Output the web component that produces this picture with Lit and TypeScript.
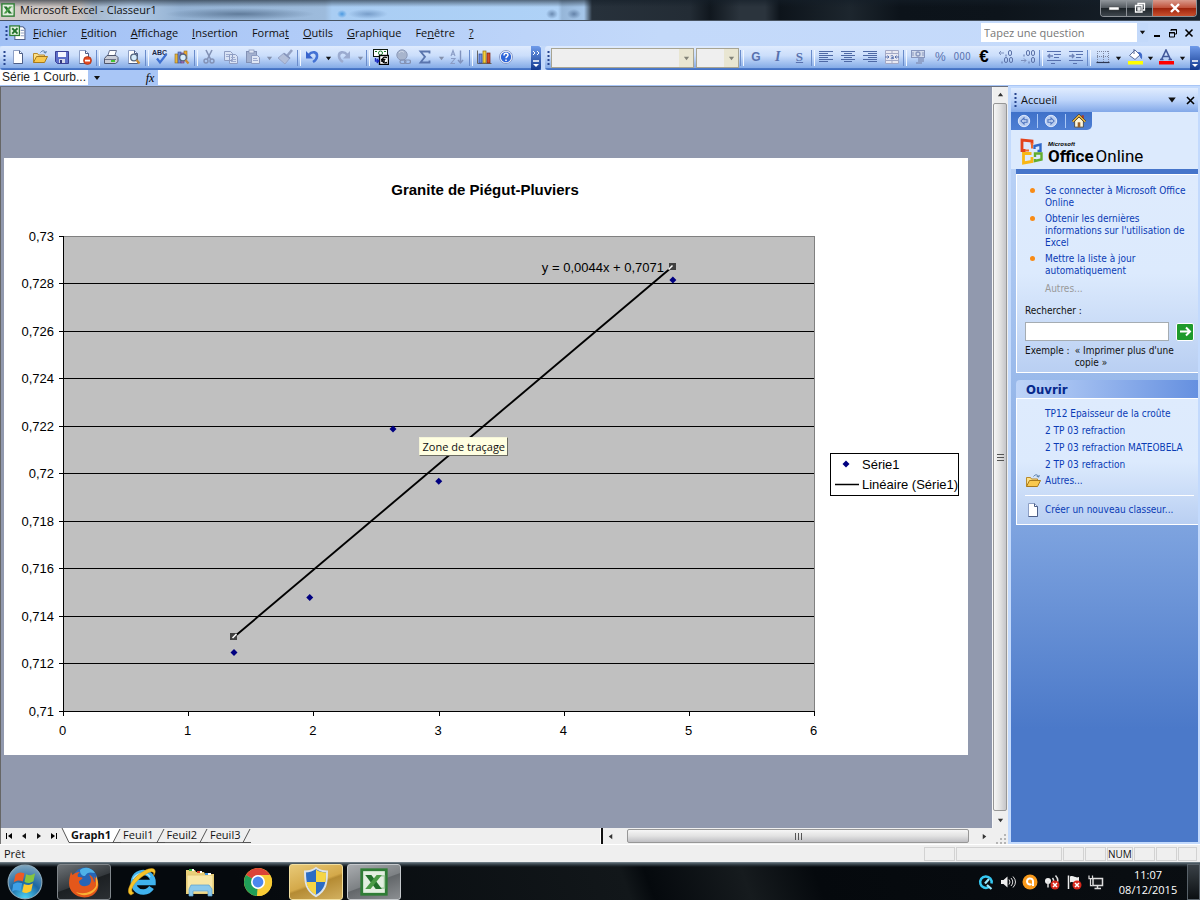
import { LitElement, html, svg, css, nothing } from "lit";
import { customElement, state } from "lit/decorators.js";
import { classMap } from "lit/directives/class-map.js";

const ui = css`
  * { box-sizing: border-box; }
  button { font: inherit; color: inherit; background: none; border: 0; padding: 0; margin: 0; display: flex; align-items: center; justify-content: center; }
  svg { display: block; flex: none; }
  a { color: inherit; text-decoration: none; }
`;

const box = (body: unknown, size = 16) => html`<svg width=${size} height=${size} viewBox="0 0 16 16" aria-hidden="true">${body}</svg>`;

const page = svg`<path d="M3.500 1.500h6l3 3v10h-9z" fill="#fff" stroke="#8d9fc5"/><path d="M9.500 1.500v3h3v10h-9" fill="none" stroke="#4d5f88"/>`;
const folder = svg`<path d="M1.500 13.500v-9h4l1 1.500h6v2" fill="#fbe08a" stroke="#b98a2a"/><path d="M1.500 13.500l3-6h11l-3 6z" fill="#f9c94f" stroke="#a87a1c"/><path d="M8.500 3.500c2-2.500 4-2 5 0m-1.800-.2l2 .8.6-2" fill="none" stroke="#557ba8"/>`;
const lens = svg`<circle cx="9" cy="8.500" r="3.300" fill="#d6ecfb" stroke="#54657f" stroke-width="1.300"/><path d="M11.500 11l3 3.500" stroke="#c98b33" stroke-width="2.200"/>`;
const lines = (rows: number[][]) => rows.map(([x, w], i) => svg`<rect x=${x} y=${2 + i * 2} width=${w} height="1" fill="#4e69a5"/>`);

const icons: Record<string, unknown> = {
  page, folder,
  save: svg`<path d="M1.500 2.500h13v12h-11l-2-2z" fill="#5d6fc9" stroke="#3a3f94"/><rect x="4" y="3" width="8" height="5" fill="#f4f6ff"/><rect x="5" y="10" width="6" height="4" fill="#d5d9ea"/><rect x="6" y="11" width="2" height="3" fill="#363a80"/>`,
  perm: svg`${page}<circle cx="11.500" cy="11.500" r="4" fill="#e2481e" stroke="#a02a0c" stroke-width=".6"/><rect x="9" y="10.700" width="5" height="1.800" fill="#fff"/>`,
  print: svg`<path d="M5 6l1.500-4.500h7L12 6" fill="#fff" stroke="#66718f"/><path d="M1.500 9.500l2.500-3h9l2 2v4l-2.500 2h-11z" fill="#c9cdd8" stroke="#4f566d"/><path d="M2 10.500h11" stroke="#6c7287"/><rect x="8" y="11" width="4" height="2" fill="#43c433"/>`,
  preview: svg`${page}${lens}`,
  spell: svg`<text x="0" y="6" font-family="Liberation Sans" font-size="7" font-weight="bold" fill="#1b2746">ABC</text><path d="M5 9.500l3 4L14.500 5" fill="none" stroke="#3d6fd0" stroke-width="2.200"/>`,
  research: svg`<rect x="1" y="5" width="3" height="9" fill="#e7b53b" stroke="#8b6c25" stroke-width=".6"/><rect x="4" y="3" width="3" height="11" fill="#6f8bd8" stroke="#3b4f94" stroke-width=".6"/><rect x="7" y="4" width="3" height="10" fill="#a774c0" stroke="#5c3a74" stroke-width=".6"/><rect x="10" y="2" width="3" height="8" fill="#f1a72c" stroke="#8b6c25" stroke-width=".6"/>${lens}`,
  cut: svg`<path d="M5 1l4.500 9M11 1L6.500 10" stroke="#8291b5" stroke-width="1.600"/><circle cx="5" cy="12" r="2" fill="none" stroke="#8291b5" stroke-width="1.400"/><circle cx="11" cy="12" r="2" fill="none" stroke="#8291b5" stroke-width="1.400"/>`,
  copy: svg`<path d="M1.500 2.500h6l2 2v7h-8zM6.500 5.500h6l2 2v7h-8z" fill="#d9e3f5" stroke="#8e9dc2"/><path d="M3 5.500h4M3 7.500h3M8 8.500h4M8 10.500h5M8 12.500h5" stroke="#9dabd0"/>`,
  paste: svg`<rect x="1.500" y="2.500" width="10" height="11" fill="#a3b1cf" stroke="#8291b5"/><rect x="4" y="1" width="5" height="3" fill="#dfe7f5" stroke="#8291b5" stroke-width=".7"/><path d="M6.500 6.500h6l2 2v6h-8z" fill="#dfe7f5" stroke="#8e9dc2"/><path d="M8 9.500h4M8 11.500h5" stroke="#9dabd0"/>`,
  brush: svg`<path d="M15 1l-5 6" stroke="#94a2c4" stroke-width="2.600"/><path d="M7 4l6 5-5 6-7-6z" fill="#b3bfd9" stroke="#98a6c8"/><path d="M7 4.500l6 5" stroke="#8493ba" stroke-width="1.600"/>`,
  undo: svg`<path d="M4.500 6c4-4.500 9-3 8.500 1.500-.2 2.500-1.500 4-4 5.500" fill="none" stroke="#4472d4" stroke-width="2.600"/><path d="M2 2v7.500h7z" fill="#3864cc"/>`,
  redo: svg`<path d="M11.500 6c-4-4.500-9-3-8.500 1.500.2 2.500 1.500 4 4 5.500" fill="none" stroke="#9babd0" stroke-width="2.600"/><path d="M14 2v7.500H7z" fill="#9babd0"/>`,
  euroconv: svg`<rect x=".5" y=".5" width="14" height="7" fill="#fff" stroke="#101a10"/><circle cx="7.500" cy="4" r="2" fill="none" stroke="#157a28"/><path d="M2 2.500h2M11 2.500h2" stroke="#157a28"/><rect x="6.500" y="6.500" width="9" height="9" fill="#fff" stroke="#000" stroke-width="1.400"/><path d="M14 8.600c-3-1.400-4.600.2-4.600 2.400s1.600 3.800 4.600 2.400M8 10.300h4.500M8 12h4" fill="none" stroke="#000" stroke-width="1.300"/><path d="M2.500 9v3h3M3.800 10l2 2-2 2" fill="none" stroke="#1c2cc0" stroke-width="1.400"/>`,
  globe: svg`<circle cx="7" cy="6" r="5.200" fill="#a8b5cd" stroke="#8d9bba"/><path d="M4 4c1.500-2 4-2 5-.5" fill="none" stroke="#cfd8e8"/><rect x="5" y="11" width="6" height="3.500" rx="1.700" fill="none" stroke="#8391b2" stroke-width="1.200"/><rect x="9.500" y="11" width="6" height="3.500" rx="1.700" fill="none" stroke="#8391b2" stroke-width="1.200"/>`,
  sigma: svg`<path d="M12.500 4.500V2.500H3.500L8 7.800l-4.500 5.700h9v-2" fill="none" stroke="#5a75ad" stroke-width="1.800"/>`,
  sort: svg`<path d="M2 7l2-5.500L6 7M2.700 5.200h2.600M2 9.500h4l-4 5h4" fill="none" stroke="#8a9cc5" stroke-width="1.100"/><path d="M11.500 1.500v12M9 11l2.500 3 2.500-3" fill="none" stroke="#8193be" stroke-width="1.400"/>`,
  chart: svg`<path d="M1.500 1.500v13h14" fill="none" stroke="#666"/><rect x="3" y="5" width="3" height="9" fill="#6c8de0" stroke="#2a479b" stroke-width=".7"/><rect x="7" y="2" width="3" height="12" fill="#f5cf3f" stroke="#8f6e14" stroke-width=".7"/><rect x="11" y="4" width="3" height="10" fill="#d54b2a" stroke="#7a210d" stroke-width=".7"/>`,
  help: svg`<circle cx="8" cy="8" r="6.500" fill="#fff" stroke="#8498c8"/><circle cx="8" cy="8" r="5.200" fill="#2f66d9"/><path d="M6 6.500c0-3 4-2.600 4-.4 0 1.500-2 1.500-2 3.200M8 10.500v1.500" fill="none" stroke="#fff" stroke-width="1.500"/>`,
  left: svg`${lines([[1, 14], [1, 9], [1, 14], [1, 9], [1, 14], [1, 9]])}`,
  center: svg`${lines([[1, 14], [4, 8], [1, 14], [4, 8], [1, 14], [4, 8]])}`,
  right: svg`${lines([[1, 14], [6, 9], [1, 14], [6, 9], [1, 14], [6, 9]])}`,
  merge: svg`<path d="M1.500 1.500h13v13h-13zM1.500 4.500h13M1.500 11.500h13M8 1.500v3M8 11.500v3" fill="#e9e9f2" stroke="#a3a9c6"/><path d="M1 8h4M3.500 6.500L5 8l-1.500 1.500M15 8h-4M12.500 6.500L11 8l1.500 1.500M6.700 7c2.600-1 2.600 0 2.600 3M9 8.500c-3 0-2.500 2 0 1" fill="none" stroke="#5871ae"/>`,
  money: svg`<rect x="1.500" y="1.500" width="13" height="7" fill="#d4dcec" stroke="#8796bd"/><circle cx="8" cy="5" r="2" fill="none" stroke="#8796bd" stroke-width="1.300"/><path d="M3 3v4M13 3v4" stroke="#8796bd"/><path d="M8 10h6M8 12h6M6 14h6" stroke="#8796bd" stroke-width="1.500"/>`,
  addDec: svg`<path d="M1 4h5M3 2L1 4l2 2" fill="none" stroke="#7d90bd"/><path d="M8 5.500v2M4 12.500v2" stroke="#5c72a8"/><rect x="10.500" y="1.500" width="3" height="5" rx="1.500" fill="none" stroke="#5c72a8"/><rect x="6.500" y="8.500" width="3" height="5" rx="1.500" fill="none" stroke="#5c72a8"/><rect x="11.500" y="8.500" width="3" height="5" rx="1.500" fill="none" stroke="#5c72a8"/>`,
  delDec: svg`<path d="M1 11.500h5M4 9.500l2 2-2 2" fill="none" stroke="#7d90bd"/><path d="M4 5.500v2M9 12.500v2" stroke="#5c72a8"/><rect x="6.500" y="1.500" width="3" height="5" rx="1.500" fill="none" stroke="#5c72a8"/><rect x="11.500" y="1.500" width="3" height="5" rx="1.500" fill="none" stroke="#5c72a8"/><rect x="11.500" y="8.500" width="3" height="5" rx="1.500" fill="none" stroke="#5c72a8"/>`,
  outdent: svg`<path d="M1 2.500h14M8 5.500h7M8 8.500h5M1 11.500h14M5 14.500h4" stroke="#5871ae"/><path d="M7 7H2M4 5L2 7l2 2" fill="none" stroke="#6f84b8" stroke-width="1.400"/>`,
  indent: svg`<path d="M1 2.500h14M8 5.500h7M8 8.500h5M1 11.500h14M5 14.500h4" stroke="#5871ae"/><path d="M1 7h5M4 5l2 2-2 2" fill="none" stroke="#6f84b8" stroke-width="1.400"/>`,
  borders: svg`<path d="M2.500 2v11M8.500 2v11M13.500 2v11M2 2.500h12M2 7.500h12" stroke="#7d87a0" stroke-dasharray="1 1"/><path d="M1.500 13.500h13" stroke="#2c3752" stroke-width="1.200"/>`,
  fill: svg`<path d="M2.500 6.500L8 1l5 5-5 4.500z" fill="#fff" stroke="#5a6c9a"/><path d="M7 0v5" stroke="#5a6c9a"/><path d="M11.500 3.500c3 0 3.500 2 3 6-1-1-1.500-2.500-1.500-3.500z" fill="#3a66c8" stroke="#3a66c8"/><rect x="1" y="12" width="15" height="3.500" fill="#ff0"/>`,
  color: svg`<path d="M3.500 10.500L8 1l4.500 9.500M5 7.500h6M2 10.500h3.500M10.500 10.500H14" fill="none" stroke="#42589a" stroke-width="1.600"/><rect x="1" y="12" width="15" height="3.500" fill="red"/>`,
  excel: svg`<rect x="1" y="1" width="14" height="14" fill="#e3efe0" stroke="#2f7d35" stroke-width="1.600"/><path d="M11.500 4.500H14v7H9" fill="none" stroke="#9cc79a" stroke-width=".8"/><path d="M3 4h3.500l6 8H9z" fill="#22712b"/><path d="M12.500 4H9.500L3 12h3z" fill="#4a9a45"/>`,
  doc: svg`<path d="M8 2.500h5l2 2v10H5.500v-4" fill="#fff" stroke="#51638d"/><path d="M11 6h3M11 8.500h3M11 11h3" stroke="#8fa0c2"/><rect x=".8" y="1.800" width="9" height="9" fill="#e4f3e0" stroke="#2f7d35" stroke-width="1.200"/><path d="M3 4l5 5M8 4L3 9" stroke="#22712b" stroke-width="1.700"/>`,
};

const tri = (dir = "down", size = 7) => {
  const d: Record<string, string> = { down: "M1 2h6L4 6z", up: "M1 6h6L4 2z", left: "M6 1v6L2 4z", right: "M2 1v6l4-3z" };
  return html`<svg width=${size} height=${size} viewBox="0 0 8 8" aria-hidden="true"><path d=${d[dir]} fill="currentColor"/></svg>`;
};

@customElement("chart-sheet")
class ChartSheet extends LitElement {
  static styles = [ui, css`
    :host { display: block; position: relative; background: #fff; font-family: "Liberation Sans", Arial, sans-serif; }
    .plot { width: 100%; height: auto; }
    .tip { position: absolute; left: 43%; top: 46.700%; background: #ffffe1; border: 1px solid #f4f4d8; border-right-color: #6b6b62; border-bottom-color: #6b6b62; font: 11px/17px "Open Sans", sans-serif; padding: 0 2px 0 3px; white-space: nowrap; color: #111; }
    .label { font-size: 13px; fill: #000; }
    .title { font-size: 15px; font-weight: bold; }
    .end { text-anchor: end; }
    .mid { text-anchor: middle; }
  `];
  points = [[1.37, 0.71248], [1.975, 0.7148], [2.64, 0.7219], [3.005, 0.7197], [4.875, 0.72817]];
  px(v: number) { return 58.5 + v * 125.2; }
  py(v: number) { return 553.5 - (v - 0.71) * 23750; }
  mark(x: number, y: number) { return svg`<path d="M${x} ${y - 3.5}l3.500 3.500-3.500 3.500-3.500-3.500z" fill="#000080"/>`; }
  render() {
    const ys = Array.from({ length: 11 }, (_, i) => 0.71 + i * 0.002);
    return html`
      <svg class="plot" viewBox="0 0 964 597" role="img" aria-label="Granite de Piégut-Pluviers">
        <defs><clipPath id="legend"><rect x="826" y="295" width="128" height="42"/></clipPath></defs>
        <text class="title mid" x="481" y="37">Granite de Piégut-Pluviers</text>
        <rect x="59.500" y="78.500" width="751" height="475" fill="#c0c0c0" stroke="#808080"/>
        ${ys.map((v, i) => {
          const y = Math.floor(this.py(v)) + 0.5;
          return svg`<path d="M55 ${y}H${i > 0 && i < 10 ? 810 : 60}" stroke="#000"/>
            <text class="label end" x="50" y=${y + 4.5}>${String(+v.toFixed(3)).replace(".", ",")}</text>`;
        })}
        <path d="M59.500 78V554" stroke="#000"/><path d="M59 553.500H811" stroke="#000"/>
        ${[0, 1, 2, 3, 4, 5, 6].map((v) => svg`<path d="M${Math.floor(this.px(v)) + 1.5} 554v4" stroke="#000"/><text class="label mid" x=${this.px(v)} y="577">${v}</text>`)}
        <path d="M230 479L668 109" stroke="#000" stroke-width="1.900"/>
        <rect x="226" y="475" width="7" height="7" fill="#404040"/><rect x="665" y="105" width="7" height="7" fill="#404040"/>
        <path d="M228.500 480l4-4M664.500 111.500l4-4" stroke="#fff" stroke-width="1.500"/>
        ${this.points.map(([x, y]) => this.mark(this.px(x), this.py(y)))}
        <text class="label end" x="660" y="114">y = 0,0044x + 0,7071</text>
        <rect x="826.500" y="295.500" width="128" height="42" fill="#fff" stroke="#000"/>
        ${this.mark(842, 306)}
        <path d="M831 326.500h24" stroke="#000" stroke-width="1.500"/>
        <g clip-path="url(#legend)"><text class="label" x="858" y="311">Série1</text><text class="label" x="858" y="331">Linéaire (Série1)</text></g>
      </svg>
      <div class="tip" role="tooltip">Zone de traçage</div>`;
  }
}

@customElement("task-pane")
class TaskPane extends LitElement {
  static styles = [ui, css`
    :host { display: flex; flex-direction: column; border: solid #c3dafd; border-width: 2px 2px 2px 3px; background: linear-gradient(#c4dafa, #8db0e6 50%, #4b79c9 85%); font: 10px/12px "DejaVu Sans Condensed", "DejaVu Sans", sans-serif; color: #111; }
    .head { display: flex; align-items: center; gap: 4px; height: 24px; padding: 0 1px 0 3px; background: linear-gradient(#e0ecfe, #bed5fa 50%, #82a8e8); font: 11px/16px "Open Sans", sans-serif; }
    .grow { flex: 1; }
    .head button { width: 14px; height: 16px; }
    .body { background: #dceafd; padding-left: 5px; }
    .nav { display: flex; align-items: center; width: 81px; height: 18px; margin-left: -5px; background: linear-gradient(#3f71c9, #4e7fd4); border-radius: 0 0 5px 0; }
    .nav button { flex: 1; height: 14px; }
    .nav button + button { border-left: 1px solid #a9c7f5; }
    .logo { display: flex; align-items: center; gap: 3px; height: 39px; padding: 4px 0 0 4px; }
    .brand { display: flex; flex-direction: column; color: #000; padding-top: 2px; }
    .ms { font: italic bold 6px/7px "Liberation Sans", sans-serif; }
    .oo { font: 17px/16px Roboto, sans-serif; }
    .oo b { margin-right: 2px; }
    .rule { height: 5px; margin-left: 5px; background: #4675ca; }
    .card { margin-left: 5px; border: 1px solid #fff; border-right: 0; background: linear-gradient(#deebfd, #dceafd 50%, #b9cff2); }
    .first { padding: 10px 4px 3px 8px; }
    ul { list-style: none; margin: 0; padding: 0; color: #0a3bb5; }
    .news li { position: relative; padding-left: 20px; margin-bottom: 4px; }
    .news li::before { content: ""; position: absolute; left: 5px; top: 3px; width: 5px; height: 5px; border-radius: 50%; background: #f88b16; }
    .more { padding: 2px 0 0 20px; color: #999; }
    .search { display: grid; grid-template-columns: 1fr 18px; gap: 5px 7px; align-items: center; margin-top: 10px; }
    .search label { grid-column: 1 / -1; }
    .search input { width: 100%; height: 19px; border: 1px solid #a5acb2; background: #fff; font: inherit; padding: 0 3px; }
    .go { width: 18px; height: 18px; background: #1f9a2b; border: 1px solid #fff; border-radius: 2px; }
    .hint { display: flex; gap: 5px; margin: 4px 0 0; }
    .hint span:first-child { white-space: nowrap; }
    .open { margin: 7px 0 0 5px; height: 18px; padding-left: 10px; border-radius: 4px 0 0 0; background: linear-gradient(90deg, #bed4f8, #6590e0); font: bold 13px/20px "DejaVu Sans Condensed", "DejaVu Sans", sans-serif; color: #06288c; }
    .files { padding: 6px 4px 0 8px; color: #0a3bb5; }
    .files li { padding-left: 20px; line-height: 17px; white-space: nowrap; }
    .row { display: flex; align-items: center; gap: 4px; height: 15px; }
    .new { border-top: 1px solid #fff; margin-top: 7px; height: 28px; padding-bottom: 1px; height: 29px; }
  `];
  render() {
    return html`
      <div class="head">
        <svg width="3" height="16"><path d="M1.500 1v14" stroke="#27458f" stroke-width="2" stroke-dasharray="2 2"/></svg>
        <span class="grow">Accueil</span>
        <button aria-label="Autres volets">${tri("down", 10)}</button>
        <button aria-label="Fermer"><svg width="9" height="9"><path d="M1 1l7 7M8 1L1 8" stroke="#000" stroke-width="1.600"/></svg></button>
      </div>
      <div class="body">
        <nav class="nav">
          <button aria-label="Précédent">${box(svg`<circle cx="8" cy="8" r="6.500" fill="#b9cdf0" stroke="#e8f0ff"/><path d="M8 4.500L4.500 8 8 11.500v-2h3.500v-3H8z" fill="#c9daf6" stroke="#4c72bd" stroke-width="1.200"/>`, 14)}</button>
          <button aria-label="Suivant">${box(svg`<circle cx="8" cy="8" r="6.500" fill="#b9cdf0" stroke="#e8f0ff"/><path d="M8 4.500L11.500 8 8 11.500v-2H4.500v-3H8z" fill="#c9daf6" stroke="#4c72bd" stroke-width="1.200"/>`, 14)}</button>
          <button aria-label="Accueil">${box(svg`<rect x="11" y="1.500" width="2.500" height="6" fill="#b5371f"/><path d="M3 8v7h10V8L8 3z" fill="#fdf6dc" stroke="#444"/><path d="M.8 8.800L8 1.800l7.200 7" fill="none" stroke="#3a2b12" stroke-width="2.800"/><path d="M.8 8.800L8 1.800l7.200 7" fill="none" stroke="#f5c045" stroke-width="1.600"/><rect x="6.500" y="9.500" width="3" height="5.500" fill="#9c6428"/>`, 14)}</button>
        </nav>
        <div class="logo">
          <svg width="25" height="27" viewBox="0 0 25 27" aria-hidden="true" fill="none">
            <path d="M5.500 12.500H2V2l10 1v3.500" stroke="#e3431b" stroke-width="2.800"/><path d="M12 5v5.500M5 12.500h4" stroke="#f0682a" stroke-width="2"/>
            <path d="M14.500 11V8l6-1.500v6.500h-3" stroke="#2f68c8" stroke-width="2.400"/>
            <path d="M11.500 15.500H3.500v9.500l8.500-1.500v-4.500" stroke="#f8b614" stroke-width="2.800"/>
            <path d="M15 19v-3.500h6.500v6l-6.500 1.500v-2" stroke="#62ad2c" stroke-width="2.400"/>
          </svg>
          <div class="brand"><span class="ms">Microsoft</span><span class="oo"><b>Office</b>Online</span></div>
        </div>
      </div>
      <div class="rule"></div>
      <section class="card first">
        <ul class="news">
          <li><a href="#connect">Se connecter à Microsoft Office Online</a></li>
          <li><a href="#news">Obtenir les dernières informations sur l'utilisation de Excel</a></li>
          <li><a href="#update">Mettre la liste à jour automatiquement</a></li>
        </ul>
        <div class="more">Autres...</div>
        <form class="search" @submit=${(e: Event) => e.preventDefault()}>
          <label for="q">Rechercher :</label>
          <input id="q" type="text" />
          <button class="go" aria-label="Rechercher"><svg width="13" height="13"><path d="M1 6.500h10M7 2.500l4 4-4 4" fill="none" stroke="#fff" stroke-width="2"/></svg></button>
        </form>
        <div class="hint"><span>Exemple :</span><span>« Imprimer plus d'une copie »</span></div>
      </section>
      <div class="open">Ouvrir</div>
      <section class="card files">
        <ul>
          ${["TP12 Epaisseur de la croûte", "2 TP 03 refraction", "2 TP 03 refraction MATEOBELA", "2 TP 03 refraction"].map((f) => html`<li><a href="#file">${f}</a></li>`)}
        </ul>
        <a class="row" href="#open">${box(folder)}Autres...</a>
        <a class="row new" href="#new">${box(page)}Créer un nouveau classeur...</a>
      </section>`;
  }
}

@customElement("desktop-taskbar")
class DesktopTaskbar extends LitElement {
  static styles = [ui, css`
    :host { display: flex; align-items: center; height: 38px; background: linear-gradient(#56646d, #2a343b 2px, transparent 4px), linear-gradient(70deg, #05090d 20%, #12171a 52%, #05090d 54%, #161b1e 62%, #05090d 68%, #0a0e12); border-top: 1px solid #6c7a83; color: #fff; font: 11px/15px "Open Sans", sans-serif; }
    .start { width: 50px; height: 36px; }
    .apps { display: flex; gap: 4px; padding-left: 7px; flex: 1; }
    .app { width: 54px; height: 36px; border: 1px solid transparent; border-radius: 3px; }
    .run { border-color: #80868b; background: linear-gradient(160deg, #6d7276, #34393d 50%, #1c2023 52%, #2b2f33); }
    .alert { border-color: #f1dfa0; background: linear-gradient(160deg, #e8c977, #d4a94a 50%, #b58b33 55%, #d2b060); }
    .active { border-color: #c4c8cb; background: linear-gradient(160deg, #a9acaf, #7d8184 50%, #63676a 52%, #8b8e91); }
    .tray { display: flex; align-items: center; gap: 6px; }
    .clock { width: 72px; text-align: center; margin-left: 8px; }
    .peek { width: 13px; height: 36px; border: 1px solid #59626a; background: linear-gradient(#3a4147, #0b0f12); margin-left: 3px; }
  `];
  render() {
    const s = (body: unknown, size = 32) => html`<svg width=${size} height=${size} viewBox="0 0 32 32" aria-hidden="true">${body}</svg>`;
    const x = svg`<circle cx="22" cy="22" r="9" fill="#d8281c"/><path d="M18 18l8 8M26 18l-8 8" stroke="#fff" stroke-width="3"/>`;
    const flag = svg`<path d="M7.500 9.500c3-2.500 5-2.500 8-1l-1.500 7c-3-1.300-5-1.200-8 .8z" fill="#ee5a24"/><path d="M17 9c3 1.300 5 1.300 8-.7l-1.500 7c-3 2-5 2-8 .7z" fill="#86c440"/><path d="M5.500 18c3-2 5-2 8-.8l-1.500 7c-3-1.300-5-1.300-7.500.4z" fill="#3fa0e6"/><path d="M15 17.800c3 1.300 5 1.300 8-.7l-1.500 7c-3 2-5 2-8 .7z" fill="#fcc92e"/>`;
    return html`
      <button class="start" aria-label="Démarrer">${s(svg`<defs><radialGradient id="orb" cx=".5" cy="1" r="1"><stop offset="0" stop-color="#4fd7f7"/><stop offset=".5" stop-color="#1c67a3"/><stop offset="1" stop-color="#7fa6bf"/></radialGradient></defs><circle cx="16" cy="16" r="15" fill="url(#orb)" stroke="#8aa9bb"/>${flag}`, 36)}</button>
      <div class="apps">
        <button class="app run" aria-label="Firefox">${s(svg`<circle cx="17" cy="14" r="12.500" fill="#2765b5"/><path d="M12 4c5-4 12-2 15 3-5-1-8-1-10 3-3 0-5-2-5-6z" fill="#4fb2e8"/><path d="M3 6l1.500 3c2-2 4.500-3 7.500-3-2 2-3 3-2 5 2 0 4 0 4.500 1-.5 2-3.500 2-3.500 4 1 5 7 5 10.500 2.500 2.500-3 1.500-7-.5-10 4 2 5 5 5 8 1-1 1-3 0-6 4 3 5.500 8 3.500 13-2 5-7.500 8-13 8C7 31 1 25 1 17c0-4 1-7 2-11z" fill="#e4571b"/><path d="M28 10c3 5 3 13-4 17-5 3-12 3-16-1 8 3 17 0 20-6z" fill="#f9b233"/>`)}</button>
        <button class="app" aria-label="Internet Explorer">${s(svg`<path d="M25.500 21.500A9.800 9.800 0 1 1 27 16.500H10" fill="none" stroke="#3fb2ee" stroke-width="5.500"/><path d="M7 13c3-6 13-8 17-2" fill="none" stroke="#a1e0fa" stroke-width="1.500"/><path d="M5 29C-2 27 6 11 18 5c9-5 14-2 9.500 5 1.500-6-3.500-5-9-1C9 15 2 25 8 27z" fill="#f6c42a" stroke="#d99a13" stroke-width=".5"/>`)}</button>
        <button class="app" aria-label="Explorateur">${s(svg`<path d="M2 4h9l1 2h8l1 2h9v20H2z" fill="#e9cf79"/><path d="M3 9h26v18H3z" fill="#f8e7a6" stroke="#e0c674"/><path d="M7 4h3M15 6h3M22 8h5" stroke="#fff" stroke-width="2"/><path d="M5 4h3" stroke="#36b548" stroke-width="2"/><path d="M13 6h3" stroke="#d9432c" stroke-width="2"/><path d="M21 8h3" stroke="#3b91dc" stroke-width="2"/><path d="M7 19h18l3 4v7h-4v-5H9v5H5v-7z" fill="#8bc9ec" stroke="#5b9fcb" stroke-width=".7"/>`)}</button>
        <button class="app" aria-label="Chrome">${s(svg`<circle cx="16" cy="16" r="14" fill="#f9cc36"/><path d="M16 16L3.900 9a14 14 0 0 1 24.200 0z" fill="#dc4437"/><path d="M16 16L3.900 9a14 14 0 0 0 11 21z" fill="#1f9e58"/><path d="M16 9h12.100A14 14 0 0 1 15 30l6.500-11z" fill="#f9cc36"/><circle cx="16" cy="16" r="7" fill="#fff"/><circle cx="16" cy="16" r="5.400" fill="#4c87ee"/>`)}</button>
        <button class="app alert" aria-label="Contrôle de compte">${s(svg`<path d="M16 2c4 3 7 3.500 11 3.500 0 11-1 19-11 24.500C6 24.500 5 16.500 5 5.500 9 5.500 12 5 16 2z" fill="#2c6cc4" stroke="#dce3ea" stroke-width="2"/><path d="M16 3.500c3 2.300 6 3 10 3 0 3.500 0 6.500-.5 9.500H16zM16 16v12.800C10.500 26 7.500 22 6.500 16z" fill="#f6d545"/>`)}</button>
        <button class="app active" aria-label="Excel">${box(icons.excel, 28)}</button>
      </div>
      <div class="tray">
        ${s(svg`<path d="M22 26a11.500 11.500 0 1 1 5-7" fill="none" stroke="#35c8f2" stroke-width="5"/><path d="M14 19l8-9M18 22l9 8" stroke="#9be8fc" stroke-width="4.500"/>`, 16)}
        ${s(svg`<path d="M2 12h5l8-7v22l-8-7H2z" fill="#eee"/><path d="M18 11q4 5 0 10M22 8q7 8 0 16M26 5q10 11 0 22" fill="none" stroke="#ddd" stroke-width="2"/>`, 16)}
        ${s(svg`<circle cx="16" cy="16" r="15" fill="#f89a1c"/><path d="M22 24V14a6 6 0 1 0-3 6" fill="none" stroke="#fff" stroke-width="4"/>`, 16)}
        ${s(svg`<circle cx="8" cy="14" r="6" fill="#eee"/><path d="M8 14v13M17 8q4 5 1 9M23 3q8 9 2 15" fill="none" stroke="#ddd" stroke-width="3"/>${x}`, 16)}
        ${s(svg`<path d="M5 3v27" stroke="#eee" stroke-width="3"/><path d="M8 5c8-3 10 4 18 1v12c-8 3-10-4-18-1z" fill="#eee"/>${x}`, 16)}
        ${s(svg`<path d="M10 9h19v14H10zM19 23v5M13 29h13" fill="#16191c" stroke="#ddd" stroke-width="3"/><path d="M2 3v6h7V3M5 9v14h4" fill="none" stroke="#ddd" stroke-width="2.500"/>`, 16)}
      </div>
      <div class="clock">11:07<br />08/12/2015</div>
      <button class="peek" aria-label="Bureau"></button>`;
  }
}

@customElement("app-root")
class AppRoot extends LitElement {
  static styles = [ui, css`
    :host { display: flex; flex-direction: column; height: 100vh; min-height: 600px; background: #efefef; color: #111; font: 11px/14px "Open Sans", "Noto Sans", sans-serif; overflow: hidden; }
    .titlebar { display: flex; align-items: center; height: 21px; flex: none; gap: 5px; padding-left: 1px; border-bottom: 1px solid #47525f; background:
      linear-gradient(rgba(20,30,40,.6), rgba(20,30,40,0) 7px),
      radial-gradient(5px 4px at 342px 14px, rgba(50,140,220,.8), transparent),
      radial-gradient(20px 5px at 368px 14px, rgba(70,110,160,.5), transparent),
      radial-gradient(6px 5px at 552px 14px, rgba(60,90,130,.6), transparent),
      radial-gradient(7px 5px at 574px 14px, rgba(60,90,130,.6), transparent),
      radial-gradient(75px 6px at 240px 14px, rgba(60,85,115,.6), transparent),
      linear-gradient(90deg, #d6cdc8, #c8c2c0 80px, #a5b8cd 94px, #b3cbe6 130px, #93b1d2 180px, #9dbbdc 325px, #a9cdf3 332px, #afd2f7 558px, #96b6d8 562px, #a5c6ea 584px, #27313b 592px, #232c35 690px, #10171e 710px, #2b343d 740px, #2b343d 765px, #0d141b 780px, #1d262e 850px, #0c131a 900px, #0d141b 1000px, #1a242e); }
    .caption { flex: 1; margin: 0; font-size: 11px; font-weight: normal; }
    .winbtns { display: flex; align-self: flex-start; margin-right: 3px; border: 1px solid #8d9298; border-top: 0; border-radius: 0 0 4px 4px; overflow: hidden; }
    .winbtns button { height: 16px; width: 26px; border-right: 1px solid #8d9298; background: linear-gradient(#92979c, #50565c 50%, #1d2328 52%, #3f474e); }
    .winbtns .close { width: 43px; border: 0; background: linear-gradient(#d99a8c, #c05039 50%, #9d230c 52%, #c9502e); }
    .menubar { display: flex; align-items: center; height: 25px; flex: none; padding: 0 3px 2px 5px; background: linear-gradient(90deg, #a1c0f5, #c3d9fa 55%, #c6dbfb); }
    .menubar .menu { padding: 0 7px; height: 20px; }
    .grow { flex: 1; }
    .ask { display: flex; width: 167px; height: 19px; background: #fff; margin-right: 1px; }
    .ask input { flex: 1; min-width: 0; border: 0; background: none; padding: 0 3px; font: inherit; }
    .ask input::placeholder { color: #777; opacity: 1; }
    .ask button { width: 11px; background: #c3d9fa; }
    .mdi { width: 16px; height: 18px; }
    .bars { display: flex; height: 24px; flex: none; background: #c3d9fa; gap: 4px; }
    .bar { display: flex; align-items: center; background: linear-gradient(#dfebfe, #cbdefb 40%, #84abe7 92%, #4472c4 94%); border-radius: 3px 0 0 3px; min-width: 0; }
    .std { flex: 0 0 541px; padding-left: 3px; }
    .fmt { flex: 1; padding-left: 2px; }
    .tool { width: 22px; height: 20px; flex: 0 1 22px; min-width: 0; padding-bottom: 2px; }
    .drop { width: 10px; height: 20px; flex: 0 1 10px; min-width: 0; }
    .off { color: #8390ac; }
    .sep { width: 5px; flex: 0 1 5px; height: 16px; display: flex; justify-content: center; }
    .sep::before { content: ""; width: 2px; border-left: 1px solid #6a8ccb; border-right: 1px solid #f1f7ff; }
    .more { width: 10px; align-self: stretch; flex: none; flex-direction: column; justify-content: flex-end; padding-bottom: 2px; gap: 5px; color: #fff; background: linear-gradient(#6f9bea, #12398f); border-radius: 0 3px 3px 0; }
    .fmt .more { margin-left: 3px; }
    .combo { appearance: none; width: 143px; height: 20px; border: 1px solid #a8a593; border-radius: 0; background: linear-gradient(90deg, transparent calc(100% - 14px), #e9e6d2 calc(100% - 14px)), #efefef; }
    .combo.size { width: 43px; }
    .combowrap { display: flex; position: relative; flex: none; margin-right: 2px; }
    .combowrap + .sep { margin-left: -1px; }
    .combowrap svg { position: absolute; right: 4px; top: 7px; color: #838378; pointer-events: none; }
    .glyph { font: bold 12px/16px "Liberation Sans", sans-serif; color: #5871ae; }
    .it { font-family: "Liberation Serif", serif; font-style: italic; font-size: 14px; }
    .so { font-family: "Liberation Serif", serif; text-decoration: underline; font-size: 13px; }
    .thin { font-weight: normal; }
    .three { font: 10px/16px "DejaVu Sans Condensed", sans-serif; }
    .euro { color: #000; font-size: 17px; }
    .formula { display: flex; height: 16px; flex: none; background: #a9c6f6; font: 12px/15px "Liberation Sans", sans-serif; }
    .formula input { border: 0; padding: 0 2px; background: #fff; font: inherit; color: #222; height: 15px; min-width: 0; }
    .name { width: 88px; }
    .fx { margin-left: 37px; width: 16px; font: italic 12px/14px "Liberation Serif", serif; -webkit-text-stroke: 0 #000; color: #000; }
    .formula .namedrop { width: 17px; }
    .formula .expr { flex: 1; }
    .work { display: flex; flex: 1; min-height: 0; border-bottom: 1px solid #fff; }
    .book { display: grid; grid-template: 1fr 16px / 1fr 16px; flex: 1; min-width: 0; border-top: 1px solid #696f7c; }
    task-pane { flex: 0 0 192px; }
    .canvas { background: #9199ae; border-left: 1px solid #666; display: flex; align-items: center; padding: 0 24px 2px 3px; min-height: 0; overflow: hidden; }
    chart-sheet { flex: 1; }
    .vs { display: flex; flex-direction: column; background: #efefef; border-left: 1px solid #f8f8f8; }
    .vs button, .hs button { width: 15px; height: 15px; flex: none; color: #333; }
    .thumb { flex: 1; border: 1px solid #979797; border-radius: 2px; display: flex; align-items: center; justify-content: center; }
    .vs .thumb { background: linear-gradient(90deg, #f6f6f6, #e2e2e2 50%, #c5c5c8); width: 14px; margin: 1px 0 2px; }
    .hs .thumb { background: linear-gradient(#f6f6f6, #e2e2e2 50%, #bfbfc3); height: 14px; margin: 0 8px 0 9px; }
    .foot { display: flex; min-width: 0; }
    .tabs { display: flex; flex: 0 0 601px; align-items: stretch; border-left: 1px solid #777; background: #efefef; border-right: 1px solid #fff; }
    .tabs .step { width: 15px; }
    .tab { border-bottom: 1px solid #666; height: 15px; padding: 0 2px; }
    .tab.on { background: #fff; font-weight: bold; padding: 0 1px; }
    .hs { display: flex; flex: 1; align-items: center; border-left: 2px solid #111; background: #efefef; }
    .status { display: flex; align-items: center; height: 17px; flex: none; padding: 0 3px 0 4px; gap: 1px; }
    .cell { height: 14px; border: 1px solid #d2d2d2; width: 21px; line-height: 13px; font-size: 10px; }
    .c1 { width: 31px; } .c2 { width: 106px; } .c3 { width: 19px; } .c4 { width: 26px; }
  `];

  @state() sheet = "Graph1";

  tool(name: string, label: string) { return html`<button class="tool" aria-label=${label}>${box(icons[name])}</button>`; }
  drop(off = false) { return html`<button class=${classMap({ drop: true, off })} aria-label="Options">${tri()}</button>`; }
  glyph(text: string, label: string, cls = "") { return html`<button class="tool" aria-label=${label}><span class="glyph ${cls}">${text}</span></button>`; }
  key(text: string) {
    const [a, b, c] = text.split("_");
    return html`<button class="menu"><span>${a}<u>${b}</u>${c}</span></button>`;
  }
  grip() { return html`<svg width="4" height="16"><path d="M1.500 1v14" stroke="#27458f" stroke-width="2" stroke-dasharray="2 2"/></svg>`; }
  slash(back = false, left = false, right = false) {
    return html`<svg width="9" height="16" aria-hidden="true">
      ${left ? svg`<path d="M0 0h8L1 14.500H0z" fill="#fff"/>` : nothing}${right ? svg`<path d="M1 0h8v14.500H8z" fill="#fff"/>` : nothing}
      <path d=${back ? "M1 0l7 14.500h1" : "M8 1L1 14.500M0 14.500h9"} fill="none" stroke="#555"/></svg>`;
  }

  render() {
    const sep = html`<span class="sep"></span>`;
    const bars3 = (v: boolean) => html`<svg width="9" height="9"><path d=${v ? "M1 1.500h7M1 4.500h7M1 7.500h7" : "M1.500 1v7M4.500 1v7M7.500 1v7"} stroke="#555"/></svg>`;
    return html`
      <header class="titlebar">
        ${box(icons.excel, 14)}
        <h1 class="caption">Microsoft Excel - Classeur1</h1>
        <div class="winbtns">
          <button aria-label="Réduire"><svg width="12" height="8"><rect x="1" y="3" width="10" height="3" fill="#fff" stroke="#444" stroke-width=".5"/></svg></button>
          <button aria-label="Restaurer"><svg width="12" height="12" fill="none" stroke="#fff" stroke-width="1.300"><path d="M4 3V1.500h6.500V8H9M1.500 3.500H8V10H1.500zM4 6h2v2H4z"/></svg></button>
          <button class="close" aria-label="Fermer"><svg width="12" height="10"><path d="M2 1l8 8M10 1L2 9" stroke="#fff" stroke-width="2.400"/></svg></button>
        </div>
      </header>
      <nav class="menubar">
        ${this.grip()}${box(icons.doc, 17)}
        ${["_F_ichier", "_E_dition", "_A_ffichage", "_I_nsertion", "Forma_t_", "_O_utils", "_G_raphique", "Fe_n_être", "_?_"].map((m) => this.key(m))}
        <span class="grow"></span>
        <div class="ask"><input aria-label="Question" placeholder="Tapez une question" /><button aria-label="Questions">${tri()}</button></div>
        <button class="mdi" aria-label="Réduire le classeur"><svg width="10" height="10"><path d="M2 8h6" stroke="#000" stroke-width="2"/></svg></button>
        <button class="mdi" aria-label="Restaurer le classeur"><svg width="10" height="10" fill="none" stroke="#000"><path d="M3 3V1.500h5.500V6H7M1 4.500h5.500V9H1.500V4M3 2h6M1 5h6"/></svg></button>
        <button class="mdi" aria-label="Fermer le classeur"><svg width="10" height="10"><path d="M1.500 1.500l7 7M8.500 1.500l-7 7" stroke="#000" stroke-width="1.600"/></svg></button>
      </nav>
      <div class="bars">
        <div class="bar std" role="toolbar" aria-label="Standard">
          ${this.grip()}
          ${this.tool("page", "Nouveau")}${this.tool("folder", "Ouvrir")}${this.tool("save", "Enregistrer")}${this.tool("perm", "Autorisation")}${sep}
          ${this.tool("print", "Imprimer")}${this.tool("preview", "Aperçu")}${sep}
          ${this.tool("spell", "Orthographe")}${this.tool("research", "Bibliothèque")}${sep}
          ${this.tool("cut", "Couper")}${this.tool("copy", "Copier")}${this.tool("paste", "Coller")}${this.drop(true)}${this.tool("brush", "Reproduire")}${sep}
          ${this.tool("undo", "Annuler")}${this.drop()}${this.tool("redo", "Rétablir")}${this.drop(true)}${sep}
          ${this.tool("euroconv", "Conversion")}${this.tool("globe", "Lien")}${this.tool("sigma", "Somme")}${this.drop(true)}${this.tool("sort", "Trier")}${sep}
          ${this.tool("chart", "Graphique")}${this.tool("help", "Aide")}
          <span class="grow"></span>
          <button class="more" aria-label="Options de barre"><svg width="8" height="4"><path d="M1 0l2 2-2 2M5 0l2 2-2 2" fill="none" stroke="#fff"/></svg><svg width="8" height="8"><path d="M1 1h6" stroke="#fff" stroke-width="1.500"/><path d="M1 4h6L4 7z" fill="#fff"/></svg></button>
        </div>
        <div class="bar fmt" role="toolbar" aria-label="Mise en forme">
          ${this.grip()}
          <span class="combowrap"><select class="combo" aria-label="Police"></select>${tri()}</span>
          <span class="combowrap"><select class="combo size" aria-label="Taille"></select>${tri()}</span>${sep}
          ${this.glyph("G", "Gras")}${this.glyph("I", "Italique", "it")}${this.glyph("S", "Souligné", "so")}${sep}
          ${this.tool("left", "Gauche")}${this.tool("center", "Centre")}${this.tool("right", "Droite")}${this.tool("merge", "Fusionner")}${sep}
          ${this.tool("money", "Monétaire")}${this.glyph("%", "Pourcentage", "thin")}${this.glyph("000", "Milliers", "three")}${this.glyph("€", "Euro", "euro")}${this.tool("addDec", "Ajouter une décimale")}${this.tool("delDec", "Réduire les décimales")}${sep}
          ${this.tool("outdent", "Diminuer le retrait")}${this.tool("indent", "Augmenter le retrait")}${sep}
          ${this.tool("borders", "Bordures")}${this.drop()}${this.tool("fill", "Remplissage")}${this.drop()}${this.tool("color", "Couleur")}${this.drop()}
          <span class="grow"></span>
          <button class="more" aria-label="Options de barre"><svg width="8" height="8"><path d="M1 1h6" stroke="#fff" stroke-width="1.500"/><path d="M1 4h6L4 7z" fill="#fff"/></svg></button>
        </div>
      </div>
      <div class="formula">
        <input class="name" aria-label="Zone Nom" value="Série 1 Courb..." />
        <button class="namedrop" aria-label="Noms">${tri("down", 8)}</button>
        <button class="fx" aria-label="Insérer une fonction">fx</button>
        <input class="expr" aria-label="Formule" />
      </div>
      <main class="work">
        <div class="book">
          <div class="canvas"><chart-sheet></chart-sheet></div>
          <div class="vs"><button aria-label="Haut">${tri("up")}</button><div class="thumb">${bars3(true)}</div><button aria-label="Bas">${tri("down")}</button></div>
          <div class="foot">
            <div class="tabs">
              <button class="step" aria-label="Première feuille"><svg width="8" height="8"><path d="M1.500 1v6" stroke="#000"/><path d="M7 1v6L3 4z"/></svg></button>
              <button class="step" aria-label="Feuille précédente">${tri("left", 8)}</button>
              <button class="step" aria-label="Feuille suivante">${tri("right", 8)}</button>
              <button class="step" aria-label="Dernière feuille"><svg width="8" height="8"><path d="M6.500 1v6" stroke="#000"/><path d="M1 1v6l4-3z"/></svg></button>
              ${this.slash(true, false, true)}
              ${["Graph1", "Feuil1", "Feuil2", "Feuil3"].map((t) => html`<button class=${classMap({ tab: true, on: t === this.sheet })} @click=${() => (this.sheet = t)}>${t}</button>${this.slash(false, t === this.sheet)}`)}
            </div>
            <div class="hs"><button aria-label="Gauche">${tri("left")}</button><div class="thumb">${bars3(false)}</div><button aria-label="Droite">${tri("right")}</button></div>
          </div>
          <svg width="16" height="16"><path d="M13 6v2M13 10v2M13 14v2M9 10v2M9 14v2M5 14v2" stroke="#b5b5b5" stroke-width="2"/></svg>
        </div>
        <task-pane></task-pane>
      </main>
      <footer class="status">
        <span class="grow">Prêt</span>
        <span class="cell c1"></span><span class="cell c2"></span><span class="cell"></span><span class="cell"></span><span class="cell c4">NUM</span><span class="cell"></span><span class="cell"></span><span class="cell c3"></span>
      </footer>
      <desktop-taskbar></desktop-taskbar>`;
  }
}
